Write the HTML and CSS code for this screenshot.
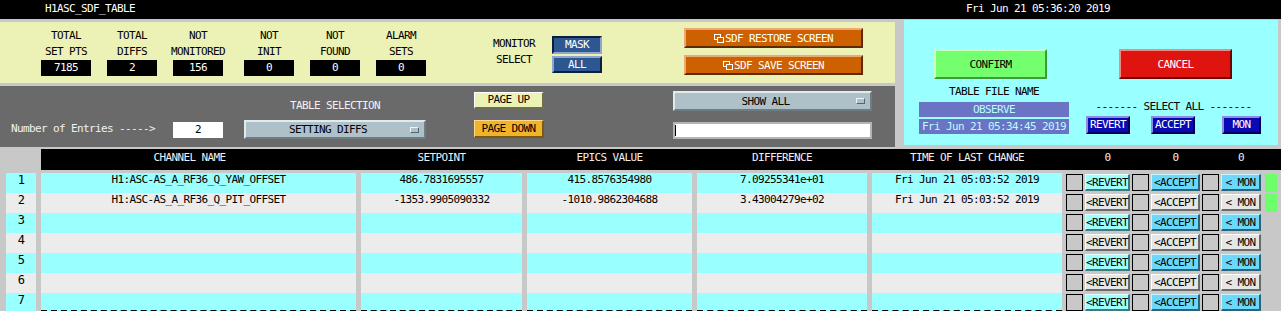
FILE: index.html
```html
<!DOCTYPE html>
<html lang="en">
<head>
    <meta charset="UTF-8">
    <title>H1ASC_SDF_TABLE</title>
    <link rel="stylesheet" href="styles.css">
</head>
<body>
    <div class="screen">
        <div class="topbar">
            <span class="title">H1ASC_SDF_TABLE</span>
            <span class="clock">Fri Jun 21 05:36:20 2019</span>
        </div>

        <div class="upper">
            <div class="controls">
                <!-- summary counters -->
                <div class="summary">
                    <div class="stats">
                        <div class="stat"><div class="stat-label">TOTAL<br>SET PTS</div><div class="stat-value">7185</div></div>
                        <div class="stat"><div class="stat-label">TOTAL<br>DIFFS</div><div class="stat-value">2</div></div>
                        <div class="stat stat-wide"><div class="stat-label">NOT<br>MONITORED</div><div class="stat-value">156</div></div>
                        <div class="stat"><div class="stat-label">NOT<br>INIT</div><div class="stat-value">0</div></div>
                        <div class="stat"><div class="stat-label">NOT<br>FOUND</div><div class="stat-value">0</div></div>
                        <div class="stat"><div class="stat-label">ALARM<br>SETS</div><div class="stat-value">0</div></div>
                    </div>

                    <div class="monitor">
                        <div class="monitor-label">MONITOR<br>SELECT</div>
                        <div class="monitor-buttons">
                            <button class="btn-blue btn-pressed">MASK</button>
                            <button class="btn-blue btn-select-all">ALL</button>
                        </div>
                    </div>

                    <div class="sdf">
                        <button class="btn-sdf"><svg class="screen-icon" width="10" height="9" viewBox="0 0 10 9"><rect x="0.5" y="0.5" width="6" height="5" fill="none" stroke="#fff"/><rect x="3.5" y="3.5" width="6" height="5" fill="#cd6100" stroke="#fff"/></svg>SDF RESTORE SCREEN</button>
                        <button class="btn-sdf"><svg class="screen-icon" width="10" height="9" viewBox="0 0 10 9"><rect x="0.5" y="0.5" width="6" height="5" fill="none" stroke="#fff"/><rect x="3.5" y="3.5" width="6" height="5" fill="#cd6100" stroke="#fff"/></svg>SDF SAVE SCREEN</button>
                    </div>
                </div>

                <!-- table selection -->
                <div class="selection">
                    <div class="entries">
                        <span class="entries-label">Number of Entries -----&gt;</span>
                        <span class="entries-value">2</span>
                    </div>

                    <div class="table-select">
                        <div class="table-select-label">TABLE SELECTION</div>
                        <div class="menu menu-table"><span class="menu-text">SETTING DIFFS</span><span class="menu-icon"></span></div>
                    </div>

                    <div class="paging">
                        <button class="btn-page btn-page-up">PAGE UP</button>
                        <button class="btn-page btn-page-down">PAGE DOWN</button>
                    </div>

                    <div class="filter">
                        <div class="menu menu-filter"><span class="menu-text">SHOW ALL</span><span class="menu-icon"></span></div>
                        <div class="text-entry"><span class="caret"></span></div>
                    </div>
                </div>
            </div>

            <div class="confirm-panel">
                <div class="confirm-row">
                    <button class="btn-confirm">CONFIRM</button>
                    <button class="btn-cancel">CANCEL</button>
                </div>
                <div class="file-row">
                    <div class="file">
                        <div class="file-label">TABLE FILE NAME</div>
                        <div class="file-box">OBSERVE</div>
                        <div class="file-box file-date">Fri Jun 21 05:34:45 2019</div>
                    </div>
                    <div class="select-all">
                        <div class="select-all-label">------- SELECT ALL -------</div>
                        <div class="select-all-buttons">
                            <button class="btn-all btn-all-revert">REVERT</button>
                            <button class="btn-all btn-all-accept">ACCEPT</button>
                            <button class="btn-all btn-all-mon">MON</button>
                        </div>
                    </div>
                </div>
            </div>
        </div>

        <div class="table">
            <div class="thead">
                <div class="th th-channel">CHANNEL NAME</div>
                <div class="th">SETPOINT</div>
                <div class="th">EPICS VALUE</div>
                <div class="th">DIFFERENCE</div>
                <div class="th">TIME OF LAST CHANGE</div>
                <div class="th-actions">
                    <span class="th-box"></span><span class="th-count th-revert">0</span>
                    <span class="th-box"></span><span class="th-count th-accept">0</span>
                    <span class="th-box"></span><span class="th-count th-mon">0</span>
                </div>
            </div>

            <div class="rows">
                <div class="row">
                    <div class="cell num">1</div>
                    <div class="cell">H1:ASC-AS_A_RF36_Q_YAW_OFFSET</div>
                    <div class="cell">486.7831695557</div>
                    <div class="cell">415.8576354980</div>
                    <div class="cell">7.09255341e+01</div>
                    <div class="cell">Fri Jun 21 05:03:52 2019</div>
                    <div class="row-actions">
                        <span class="check"></span><button class="act act-revert">&lt;REVERT</button>
                        <span class="check"></span><button class="act act-accept">&lt;ACCEPT</button>
                        <span class="check"></span><button class="act act-mon">&lt; MON</button>
                        <span class="flag flag-on"></span>
                    </div>
                </div>
                <div class="row">
                    <div class="cell num">2</div>
                    <div class="cell">H1:ASC-AS_A_RF36_Q_PIT_OFFSET</div>
                    <div class="cell">-1353.9905090332</div>
                    <div class="cell">-1010.9862304688</div>
                    <div class="cell">3.43004279e+02</div>
                    <div class="cell">Fri Jun 21 05:03:52 2019</div>
                    <div class="row-actions">
                        <span class="check"></span><button class="act act-revert">&lt;REVERT</button>
                        <span class="check"></span><button class="act act-accept">&lt;ACCEPT</button>
                        <span class="check"></span><button class="act act-mon">&lt; MON</button>
                        <span class="flag flag-on"></span>
                    </div>
                </div>
                <div class="row">
                    <div class="cell num">3</div>
                    <div class="cell"></div><div class="cell"></div><div class="cell"></div><div class="cell"></div><div class="cell"></div>
                    <div class="row-actions">
                        <span class="check"></span><button class="act act-revert">&lt;REVERT</button>
                        <span class="check"></span><button class="act act-accept">&lt;ACCEPT</button>
                        <span class="check"></span><button class="act act-mon">&lt; MON</button>
                        <span class="flag"></span>
                    </div>
                </div>
                <div class="row">
                    <div class="cell num">4</div>
                    <div class="cell"></div><div class="cell"></div><div class="cell"></div><div class="cell"></div><div class="cell"></div>
                    <div class="row-actions">
                        <span class="check"></span><button class="act act-revert">&lt;REVERT</button>
                        <span class="check"></span><button class="act act-accept">&lt;ACCEPT</button>
                        <span class="check"></span><button class="act act-mon">&lt; MON</button>
                        <span class="flag"></span>
                    </div>
                </div>
                <div class="row">
                    <div class="cell num">5</div>
                    <div class="cell"></div><div class="cell"></div><div class="cell"></div><div class="cell"></div><div class="cell"></div>
                    <div class="row-actions">
                        <span class="check"></span><button class="act act-revert">&lt;REVERT</button>
                        <span class="check"></span><button class="act act-accept">&lt;ACCEPT</button>
                        <span class="check"></span><button class="act act-mon">&lt; MON</button>
                        <span class="flag"></span>
                    </div>
                </div>
                <div class="row">
                    <div class="cell num">6</div>
                    <div class="cell"></div><div class="cell"></div><div class="cell"></div><div class="cell"></div><div class="cell"></div>
                    <div class="row-actions">
                        <span class="check"></span><button class="act act-revert">&lt;REVERT</button>
                        <span class="check"></span><button class="act act-accept">&lt;ACCEPT</button>
                        <span class="check"></span><button class="act act-mon">&lt; MON</button>
                        <span class="flag"></span>
                    </div>
                </div>
                <div class="row row-last">
                    <div class="cell num">7</div>
                    <div class="cell"></div><div class="cell"></div><div class="cell"></div><div class="cell"></div><div class="cell"></div>
                    <div class="row-actions">
                        <span class="check"></span><button class="act act-revert">&lt;REVERT</button>
                        <span class="check"></span><button class="act act-accept">&lt;ACCEPT</button>
                        <span class="check"></span><button class="act act-mon">&lt; MON</button>
                        <span class="flag"></span>
                    </div>
                </div>
            </div>
        </div>
    </div>
</body>
</html>
```

FILE: styles.css
```css
* {
    margin: 0;
    padding: 0;
    box-sizing: border-box;
}

body {
    background: #c8c8c8;
    font-family: "DejaVu Sans Mono", "Liberation Mono", monospace;
    font-size: 11px;
    letter-spacing: -0.62px;
    color: #000;
}

button {
    font: inherit;
    letter-spacing: inherit;
    color: inherit;
    background: none;
    cursor: pointer;
    white-space: nowrap;
}

.screen {
    width: 1281px;
    height: 311px;
    overflow: hidden;
}

/* title bar */
.topbar {
    display: flex;
    height: 19px;
    line-height: 18px;
    background: #000;
    color: #fff;
}

.title {
    width: 966px;
    padding-left: 45px;
}

.upper {
    display: flex;
    height: 129px;
}

.controls {
    width: 895px;
    padding-top: 3px;
}

/* yellow summary panel */
.summary {
    display: flex;
    height: 61px;
    background: #ecf1b6;
}

.stats {
    display: flex;
    padding: 6px 0 0 41px;
}

.stat {
    display: flex;
    flex-direction: column;
    align-items: center;
    width: 50px;
    margin-right: 16px;
}

.stat-wide {
    margin-right: 21px;
}

.stat:last-child {
    margin-right: 0;
}

.stat-label {
    line-height: 16px;
    text-align: center;
    white-space: nowrap;
}

.stat-value {
    width: 50px;
    height: 16px;
    line-height: 15px;
    background: #000;
    color: #fff;
    text-align: center;
}

.monitor {
    display: flex;
    margin-left: 63px;
}

.monitor-label {
    width: 50px;
    padding-top: 14px;
    line-height: 16px;
    text-align: center;
}

.monitor-buttons {
    display: flex;
    flex-direction: column;
    gap: 2px;
    margin-left: 13px;
    padding-top: 14px;
}

.btn-blue {
    width: 50px;
    height: 18px;
    line-height: 14px;
    background: #2c5791;
    color: #fff;
    border: 2px solid;
    border-color: #8fa5cf #0c1e3e #0c1e3e #8fa5cf;
}

.btn-pressed {
    border-color: #0c1e3e #8fa5cf #8fa5cf #0c1e3e;
}

.btn-select-all {
    height: 17px;
    line-height: 13px;
}

.sdf {
    display: flex;
    flex-direction: column;
    gap: 7px;
    margin-left: 82px;
    padding-top: 6px;
}

.btn-sdf {
    display: flex;
    align-items: center;
    justify-content: center;
    width: 179px;
    height: 20px;
    background: #cd6100;
    color: #fff;
    border: 2px solid;
    border-color: #eba878 #5c2c00 #5c2c00 #eba878;
}

.screen-icon {
    margin-right: 1px;
}

/* dark selection panel */
.selection {
    display: flex;
    height: 61px;
    margin-top: 3px;
    background: #6a6a6a;
    color: #f2f2f2;
}

.entries {
    display: flex;
    align-items: flex-start;
    padding: 36px 0 0 11px;
}

.entries-label {
    width: 162px;
    line-height: 13px;
    white-space: nowrap;
}

.entries-value {
    width: 50px;
    height: 16px;
    line-height: 15px;
    background: #fff;
    color: #000;
    text-align: center;
}

.table-select {
    width: 182px;
    margin-left: 21px;
    padding-top: 13px;
}

.table-select-label {
    line-height: 13px;
    text-align: center;
}

.menu {
    display: flex;
    align-items: center;
    background: #afc1c8;
    color: #000;
    border: 2px solid;
    border-color: #e3eaec #6f7d82 #6f7d82 #e3eaec;
}

.menu-table {
    height: 19px;
    margin-top: 8px;
}

.menu-text {
    flex: 1;
    text-align: center;
}

.menu-icon {
    width: 9px;
    height: 6px;
    margin-right: 5px;
    background: #afc1c8;
    border: 1px solid;
    border-color: #f0f4f5 #58666b #58666b #f0f4f5;
}

.paging {
    display: flex;
    flex-direction: column;
    width: 70px;
    margin-left: 48px;
    padding-top: 6px;
}

.btn-page {
    width: 70px;
    height: 17px;
    line-height: 14px;
    color: #000;
    border-style: solid;
    border-width: 1px 2px 2px 1px;
}

.btn-page-up {
    background: #ecf1b6;
    border-color: #ffffff #6e6e50 #6e6e50 #ffffff;
}

.btn-page-down {
    height: 18px;
    margin-top: 11px;
    background: #f0b42a;
    border-color: #ffd88a #7a5a10 #7a5a10 #ffd88a;
}

.filter {
    width: 199px;
    margin-left: 129px;
    padding-top: 5px;
}

.menu-filter {
    height: 20px;
}

.text-entry {
    display: flex;
    align-items: center;
    height: 17px;
    margin-top: 11px;
    background: #fff;
    border: 2px solid #b4b4b4;
}

.caret {
    width: 1px;
    height: 11px;
    background: #000;
}

/* cyan confirm panel */
.confirm-panel {
    width: 374px;
    height: 125px;
    margin: 1px 0 0 9px;
    background: #99ffff;
}

.confirm-row {
    display: flex;
    gap: 72px;
    padding: 29px 0 0 30px;
}

.btn-confirm,
.btn-cancel {
    width: 113px;
    height: 30px;
    border: 2px solid;
}

.btn-confirm {
    background: #73ff6e;
    border-color: #c8ffc0 #3c9a38 #3c9a38 #c8ffc0;
}

.btn-cancel {
    background: #e0140e;
    color: #fff;
    border-color: #f08a80 #700000 #700000 #f08a80;
}

.file-row {
    display: flex;
    margin-top: 6px;
}

.file {
    width: 150px;
    margin-left: 15px;
}

.file-label {
    line-height: 13px;
    text-align: center;
    white-space: nowrap;
}

.file-box {
    height: 15px;
    margin-top: 4px;
    line-height: 15px;
    background: #6b74c4;
    color: #b4ffff;
    text-align: center;
    white-space: nowrap;
}

.file-date {
    margin-top: 2px;
}

.select-all {
    width: 175px;
    margin-left: 17px;
    padding-top: 15px;
}

.select-all-label {
    line-height: 13px;
    text-align: center;
    white-space: nowrap;
}

.select-all-buttons {
    display: flex;
    margin-top: 3px;
}

.btn-all {
    width: 44px;
    height: 18px;
    line-height: 14px;
    background: #0a0ab4;
    color: #fff;
    border: 2px solid;
    border-color: #8c8ce6 #00005a #00005a #8c8ce6;
}

.btn-all-accept {
    margin-left: 21px;
}

.btn-all-mon {
    width: 39px;
    margin-left: 27px;
}

/* channel table */
.thead {
    display: grid;
    grid-template-columns: 315px 161px 165px 170px 190px 1fr;
    column-gap: 5px;
    height: 21px;
    margin: 1px 0 0 41px;
    line-height: 18px;
    background: #000;
    color: #f0f0f0;
}

.th {
    text-align: center;
    white-space: nowrap;
}

.th-channel {
    padding-right: 18px;
}

.th-actions {
    display: flex;
    gap: 2px;
    margin-left: -1px;
}

.th-box {
    width: 17px;
}

.th-count {
    text-align: center;
}

.th-revert {
    width: 45px;
}

.th-accept {
    width: 49px;
}

.th-mon {
    width: 40px;
}

.rows {
    margin-top: 3px;
}

.row {
    display: grid;
    grid-template-columns: 30px 315px 161px 165px 170px 190px 1fr;
    column-gap: 5px;
    height: 20px;
    padding-left: 6px;
}

.cell {
    height: 20px;
    line-height: 13px;
    text-align: center;
    white-space: nowrap;
    overflow: hidden;
    background: #99ffff;
}

.num {
    font-size: 12px;
    line-height: 15px;
}

.row:nth-child(even) .cell {
    background: #ececec;
}

.row-last .cell:not(.num) {
    height: 19px;
    border-bottom: 2px dashed #000;
}

.row-actions {
    display: flex;
    align-items: flex-start;
    gap: 2px;
    margin-left: -1px;
    padding-top: 1px;
}

.check {
    width: 17px;
    height: 17px;
    background: #c8c8c8;
    border: 1px solid #000;
}

.act {
    height: 17px;
    padding-top: 1px;
    line-height: 14px;
    text-align: center;
    color: #000;
    border-style: solid;
    border-width: 1px 2px 2px 1px;
}

.act-revert {
    width: 45px;
    background: #9effff;
    border-color: #e0ffff #3d7b80 #3d7b80 #e0ffff;
}

.act-accept {
    width: 49px;
}

.act-mon {
    width: 40px;
}

.act-accept,
.act-mon {
    background: #6cd9fc;
    border-color: #c8f4ff #2b6478 #2b6478 #c8f4ff;
}

.row:nth-child(even) .act {
    background: #e6e6e6;
    border-color: #ffffff #6a6a6a #6a6a6a #ffffff;
}

.flag {
    width: 12px;
    height: 18px;
    margin-left: 2px;
}

.flag-on {
    background: #6cff6c;
}
```
